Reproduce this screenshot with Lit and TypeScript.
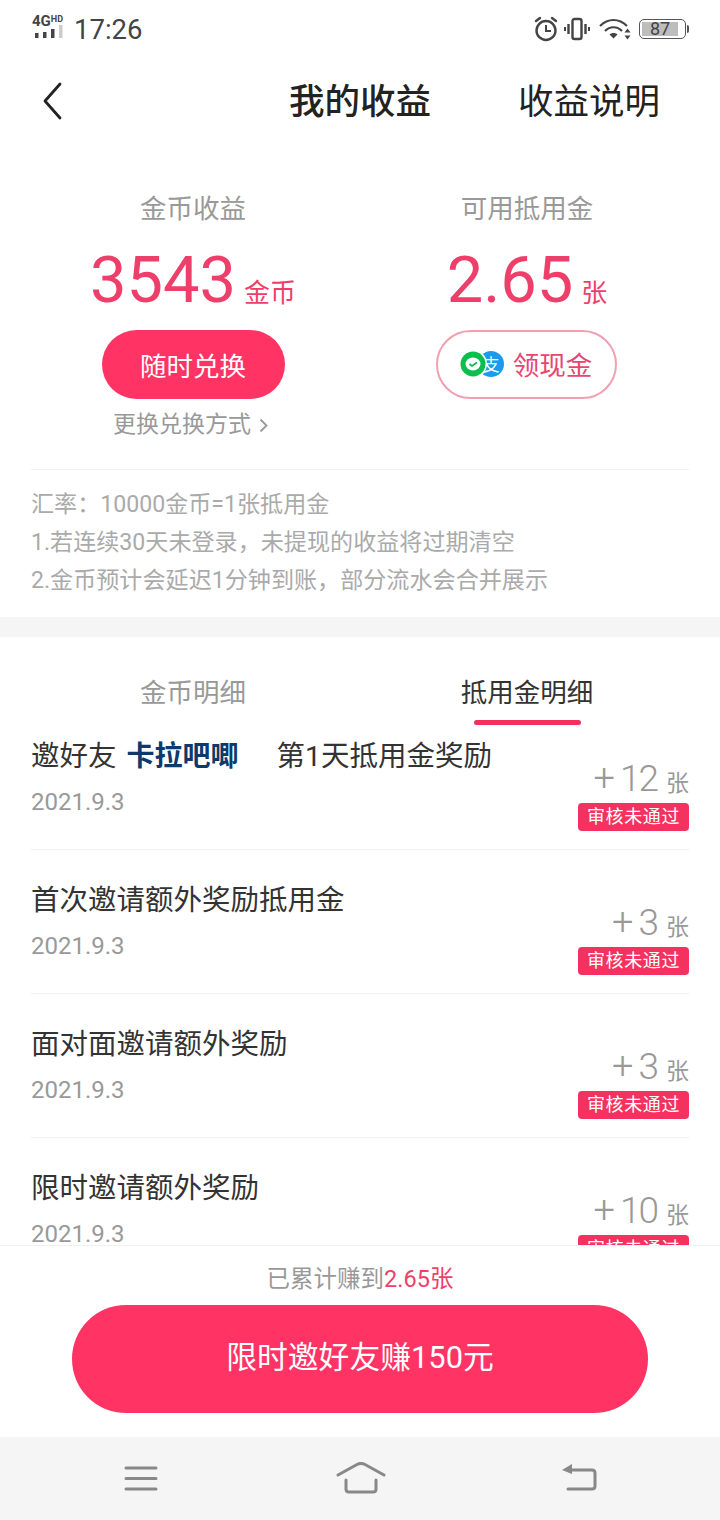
import { LitElement, html, css, svg } from "lit";
import { customElement } from "lit/decorators.js";

const rows = [
  { amount: "12", date: "2021.9.3" },
  { amount: "3", date: "2021.9.3", title: "首次邀请额外奖励抵用金" },
  { amount: "3", date: "2021.9.3", title: "面对面邀请额外奖励" },
  { amount: "10", date: "2021.9.3", title: "限时邀请额外奖励" },
];

@customElement("app-root")
export class AppRoot extends LitElement {
  static styles = css`
    :host {
      display: block;
      width: 720px;
      height: 1520px;
      overflow: hidden;
      background: #fff;
      font-family: Roboto, "Noto Sans CJK SC", sans-serif;
      color: #333;
    }
    * { box-sizing: border-box; }
    .page { display: flex; flex-direction: column; height: 1520px; }
    svg { display: block; flex: none; }

    .status { height: 56px; flex: none; display: flex; align-items: center; padding: 2px 31px 0 32px; }
    .net { width: 35px; height: 28px; display: flex; flex-direction: column; margin-right: 7px; }
    .net-text { height: 10px; display: flex; align-items: flex-start; font-weight: 700; color: #444; line-height: 12px; }
    .net-4g { font-size: 15px; }
    .net-hd { font-size: 9px; line-height: 9px; }
    .time { font-size: 27.5px; color: #444; line-height: 32px; flex: 1; padding-top: 2px; }
    .st-icons { display: flex; align-items: center; gap: 8px; }
    .st-alarm { margin-right: -3px; }
    .st-vibrate { margin-right: 1px; }
    .battery { display: flex; align-items: center; }
    .batt-box { width: 47px; height: 20px; border: 1.5px solid #555; border-radius: 5px; padding: 2px 7px 2px 2px; }
    .batt-fill { height: 100%; background: #bdbdbd; display: flex; align-items: center; justify-content: center; font-size: 18px; color: #444; line-height: 14px; }
    .batt-nub { width: 2px; height: 8px; background: #555; margin-left: 1px; border-radius: 0 2px 2px 0; }

    .nav { height: 90px; flex: none; display: flex; align-items: center; padding: 0 60px 0 41px; }
    .title { font-size: 35.5px; font-weight: 500; color: #222; margin-left: 226px; line-height: 48px; padding-top: 2px; }
    .explain { font-size: 35.5px; color: #222; margin-left: auto; line-height: 52px; padding-top: 2px; }

    .summary { display: grid; grid-template-columns: 386px 282px; }
    .col { display: flex; flex-direction: column; align-items: center; }
    .col-label { font-size: 26.5px; line-height: 36px; color: #999; margin-top: 45px; }
    .value { display: flex; align-items: baseline; color: #ee3f6b; height: 68px; margin-top: 19px; line-height: 68px; }
    .num { font-size: 65px; font-weight: 400; }
    .unit { font-size: 26px; margin-left: 8px; }
    .btn { height: 69px; margin-top: 16px; border-radius: 35px; display: flex; align-items: center; justify-content: center; font-size: 26.5px; }
    .btn-fill { width: 183px; background: #ff3464; color: #fff; }
    .btn-line { width: 181px; border: 2px solid #f0a0b0; color: #e5476f; gap: 9px; margin-right: 2px; padding-bottom: 2px; }
    .swap { font-size: 23px; line-height: 32px; color: #999; margin: 10px 5px 0 0; display: flex; align-items: center; gap: 8px; }

    .notes { margin: 28px 31px 0; padding-top: 16px; border-top: 1px solid #f0f0f0; font-size: 23.1px; line-height: 38px; color: #aaa; height: 148px; }
    .band { height: 20px; flex: none; background: #f5f5f5; }

    .tabs { display: grid; grid-template-columns: 386px 282px; height: 89px; flex: none; }
    .tab { display: flex; flex-direction: column; align-items: center; font-size: 26.5px; color: #999; line-height: 36px; padding-top: 38px; }
    .tab.on { color: #333; }
    .tab-bar { width: 107px; height: 5px; border-radius: 3px; background: #f0325f; margin-top: 9px; }

    .list { flex: 1; min-height: 0; overflow: hidden; padding: 0 31px; }
    .row { height: 144px; border-bottom: 1px solid #f0f0f0; display: flex; justify-content: space-between; padding-top: 31px; }
    .row.first { height: 124px; padding-top: 11px; }
    .row-title { font-size: 28.5px; line-height: 40px; color: #333; white-space: pre; }
    .friend { font-weight: 700; color: #0b3a6b; font-size: 28px; margin: 0 38px 0 10px; }
    .row-date { font-size: 24px; line-height: 32px; color: #999; margin-top: 9px; }
    .row-right { display: flex; flex-direction: column; align-items: flex-end; }
    .amount { display: flex; align-items: baseline; color: #999; height: 44px; line-height: 44px; margin-top: 19px; }
    .amount-num { font-size: 37px; font-weight: 300; letter-spacing: -2px; }
    .amount-plus { font-size: 38px; font-weight: 300; margin-right: 5px; }
    .amount-unit { font-size: 23px; margin: 0 0 1px 9px; }
    .badge { height: 28px; margin-top: 3px; width: 111px; border-radius: 4px; background: #f5325f; color: #fff; font-size: 18px; line-height: 28px; text-align: center; letter-spacing: 0.6px; }

    .foot { flex: none; height: 192px; background: #fff; border-top: 1px solid #f0f0f0; display: flex; flex-direction: column; align-items: center; }
    .total { font-size: 23.5px; line-height: 32px; color: #999; margin-top: 17px; }
    .total em { font-style: normal; color: #ee3f6b; }
    .cta { width: 576px; height: 108px; margin-top: 10px; padding-bottom: 9px; border-radius: 54px; background: #ff3464; color: #fff; font-size: 30.8px; display: flex; align-items: center; justify-content: center; }

    .sys { height: 83px; flex: none; background: #f5f5f5; position: relative; display: flex; }
    .sys-icon { position: absolute; }
    .sys-menu { left: 124px; top: 29px; }
    .sys-home { left: 336px; top: 25px; }
    .sys-back { left: 561px; top: 26px; }
  `;

  private alarm() {
    return svg`<svg class="st-alarm" width="26" height="26" viewBox="0 0 26 26" fill="none" stroke="#444" stroke-width="2.4">
      <circle cx="13" cy="14.5" r="9.5"/><path d="M13 9v6h5" stroke-width="2"/><path d="M3 5l4-3M23 5l-4-3" stroke-linecap="round"/></svg>`;
  }
  private vibrate() {
    return svg`<svg class="st-vibrate" width="26" height="24" viewBox="0 0 26 24" fill="none" stroke="#444">
      <rect x="8.5" y="2" width="9" height="20" rx="2" stroke-width="2.4"/>
      <path d="M4.5 7v10M21.5 7v10" stroke-width="2.4"/><path d="M1 10v4M25 10v4" stroke-width="2"/></svg>`;
  }
  private wifi() {
    return svg`<svg width="32" height="22" viewBox="0 0 32 22" fill="none" stroke="#444" stroke-width="2.2">
      <path d="M1 8C9 0 20 0 28 8"/><path d="M6 13c5-5 12-5 17 0"/>
      <path d="M10.500 16.500l4 4 4-4c-2-2-6-2-8 0z" fill="#444" stroke="none"/>
      <path d="M28.500 10.500l-3 4h6zM28.500 21.500l-3-4h6z" fill="#444" stroke="none"/></svg>`;
  }
  private payIcon() {
    return svg`<svg width="44" height="28" viewBox="0 0 44 28">
      <circle cx="31" cy="14" r="13" fill="#1a9bf0"/>
      <text x="31" y="20.500" font-size="17" fill="#fff" text-anchor="middle" font-family="Noto Sans CJK SC">支</text>
      <circle cx="13" cy="14" r="14" fill="#fff"/>
      <circle cx="13" cy="14" r="12.500" fill="#0bbf4e"/>
      <ellipse cx="13" cy="14" rx="7.500" ry="6.500" fill="#fff"/>
      <path d="M9.500 14l2.500 2 5-3.500" fill="none" stroke="#0bbf4e" stroke-width="1.800"/>
      </svg>`;
  }

  render() {
    return html`<div class="page">
      <div class="status">
        <div class="net">
          <div class="net-text"><span class="net-4g">4G</span><span class="net-hd">HD</span></div>
          <svg width="32" height="16" viewBox="0 0 32 16">
            <rect x="3" y="8" width="3.500" height="5" fill="#444"/>
            <rect x="11" y="7" width="3.500" height="6" fill="#444"/>
            <rect x="19" y="4" width="3.500" height="9" fill="#444"/>
            <rect x="27" y="0" width="3.500" height="13" fill="#ccc"/>
          </svg>
        </div>
        <div class="time">17:26</div>
        <div class="st-icons">
          ${this.alarm()}${this.vibrate()}${this.wifi()}
          <div class="battery"><div class="batt-box"><div class="batt-fill">87</div></div><div class="batt-nub"></div></div>
        </div>
      </div>

      <div class="nav">
        <svg width="22" height="38" viewBox="0 0 22 38" fill="none" stroke="#222" stroke-width="2.800" stroke-linecap="round" stroke-linejoin="round"><path d="M19 2L4 19l15 17"/></svg>
        <div class="title">我的收益</div>
        <div class="explain">收益说明</div>
      </div>

      <div class="summary">
        <div class="col">
          <div class="col-label">金币收益</div>
          <div class="value"><span class="num">3543</span><span class="unit">金币</span></div>
          <div class="btn btn-fill">随时兑换</div>
          <div class="swap">更换兑换方式
            <svg width="9" height="15" viewBox="0 0 9 15" fill="none" stroke="#999" stroke-width="1.800"><path d="M1.500 1.500l6 6-6 6"/></svg>
          </div>
        </div>
        <div class="col">
          <div class="col-label">可用抵用金</div>
          <div class="value"><span class="num">2.65</span><span class="unit">张</span></div>
          <div class="btn btn-line">${this.payIcon()}<span>领现金</span></div>
        </div>
      </div>

      <div class="notes">
        <div>汇率：10000金币=1张抵用金</div>
        <div>1.若连续30天未登录，未提现的收益将过期清空</div>
        <div>2.金币预计会延迟1分钟到账，部分流水会合并展示</div>
      </div>
      <div class="band"></div>

      <div class="tabs">
        <div class="tab">金币明细</div>
        <div class="tab on">抵用金明细<div class="tab-bar"></div></div>
      </div>

      <div class="list">
        ${rows.map((r, i) => html`<div class="row ${i === 0 ? "first" : ""}">
          <div>
            <div class="row-title">${i === 0
              ? html`邀好友<span class="friend">卡拉吧唧</span>第1天抵用金奖励`
              : r.title}</div>
            <div class="row-date">${r.date}</div>
          </div>
          <div class="row-right">
            <div class="amount"><span class="amount-plus">+</span><span class="amount-num">${r.amount}</span><span class="amount-unit">张</span></div>
            <div class="badge">审核未通过</div>
          </div>
        </div>`)}
      </div>

      <div class="foot">
        <div class="total">已累计赚到<em>2.65张</em></div>
        <div class="cta">限时邀好友赚150元</div>
      </div>

      <div class="sys">
        <svg class="sys-icon sys-menu" width="34" height="26" viewBox="0 0 34 26" fill="none" stroke="#888" stroke-width="3" stroke-linecap="round"><path d="M2 2h30M2 12.500h30M2 23h30"/></svg>
        <svg class="sys-icon sys-home" width="50" height="32" viewBox="0 0 50 32" fill="none" stroke="#888" stroke-width="3" stroke-linecap="round" stroke-linejoin="round"><path d="M2 13L21 2.500q4-2 8 0L48 13"/><path d="M10 18v9q0 3 3 3h24q3 0 3-3v-9"/></svg>
        <svg class="sys-icon sys-back" width="36" height="30" viewBox="0 0 36 30" fill="none" stroke="#888" stroke-width="3" stroke-linecap="round" stroke-linejoin="round"><path d="M10 7h21q3 0 3 3v13q0 3-3 3H7"/><path d="M11 1v10L1 7z" fill="#888" stroke="none"/></svg>
      </div>
    </div>`;
  }
}
